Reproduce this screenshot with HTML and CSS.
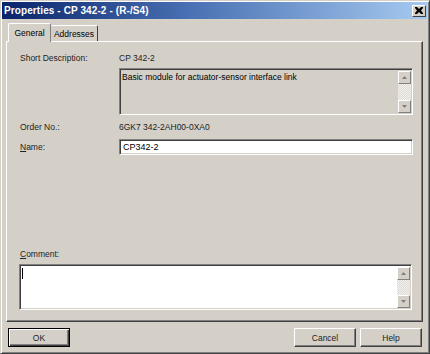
FILE: index.html
```html
<!DOCTYPE html>
<html>
<head>
<meta charset="utf-8">
<link rel="stylesheet" href="styles.css">
</head>
<body>
<div class="window">
  <div class="titlebar">
    <span class="title">Properties - CP 342-2 - (R-/S4)</span>
    <span class="close"><svg width="8" height="7" viewBox="0 0 8 7"><path d="M0 0h2l2 2 2-2h2v1L6 3.5 8 6v1H6L4 5 2 7H0V6l2-2.5L0 1z" fill="#000"/></svg></span>
  </div>
  <div class="body">
    <div class="tabs">
      <div class="tab active">General</div>
      <div class="tab">Addresses</div>
    </div>
    <div class="panel">
      <div class="row r1"><span class="lbl">Short Description:</span><span class="val">CP 342-2</span></div>
      <div class="row r2"><span class="lbl"></span>
        <div class="box desc">
          <div class="boxtext">Basic module for actuator-sensor interface link</div>
          <div class="sb"><span class="sbbtn"><svg width="5" height="3" viewBox="0 0 5 3"><path d="M2.5 0L5 3H0z" fill="#808080"/></svg></span><span class="track"></span><span class="sbbtn"><svg width="5" height="3" viewBox="0 0 5 3"><path d="M0 0h5L2.5 3z" fill="#808080"/></svg></span></div>
        </div>
      </div>
      <div class="row r3"><span class="lbl">Order No.:</span><span class="val">6GK7 342-2AH00-0XA0</span></div>
      <div class="row r4"><span class="lbl"><u>N</u>ame:</span><div class="box name">CP342-2</div></div>
      <div class="row r5"><span class="lbl"><u>C</u>omment:</span></div>
      <div class="box comment">
        <div class="boxtext"><span class="caret"></span></div>
        <div class="sb"><span class="sbbtn"><svg width="5" height="3" viewBox="0 0 5 3"><path d="M2.5 0L5 3H0z" fill="#808080"/></svg></span><span class="track"></span><span class="sbbtn"><svg width="5" height="3" viewBox="0 0 5 3"><path d="M0 0h5L2.5 3z" fill="#808080"/></svg></span></div>
      </div>
    </div>
    <div class="buttons">
      <div class="btn default">OK</div>
      <div class="spacer"></div>
      <div class="btn">Cancel</div>
      <div class="btn">Help</div>
    </div>
  </div>
</div>
</body>
</html>
```
FILE: styles.css
```css
html, body {
  margin: 0;
  padding: 0;
  background: #d4d0c8;
}
body {
  font-family: "Liberation Sans", Arial, sans-serif;
  font-size: 8.5px;
  color: #000;
}
.window {
  width: 430px;
  height: 354px;
  box-sizing: border-box;
  border-top: 1px solid #d4d0c8;
  border-left: 1px solid #d4d0c8;
  border-right: 1px solid #404040;
  border-bottom: 1px solid #404040;
  box-shadow: inset 1px 1px 0 #fff, inset -1px -1px 0 #808080;
  padding: 1px 2px 2px 1px;
  display: flex;
  flex-direction: column;
}
.titlebar {
  height: 17px;
  background: linear-gradient(to right, #0a246a 0%, #4a72b4 45%, #a6caf0 100%);
  display: flex;
  align-items: center;
  justify-content: space-between;
  padding: 0 1px 0 2px;
}
.title {
  color: #fff;
  font-weight: bold;
  font-size: 10px;
  letter-spacing: 0.1px;
}
.close {
  width: 14px;
  height: 12px;
  box-sizing: border-box;
  background: #d4d0c8;
  border-top: 1px solid #fff;
  border-left: 1px solid #fff;
  border-right: 1px solid #404040;
  border-bottom: 1px solid #404040;
  display: flex;
  align-items: center;
  justify-content: center;
}
.body {
  padding: 4px 0 0 4px;
  display: flex;
  flex-direction: column;
}
.tabs {
  display: flex;
  align-items: flex-end;
  height: 18px;
  padding-left: 2px;
}
.tab {
  box-sizing: border-box;
  height: 16px;
  padding: 0 4px;
  border-top: 1px solid #fff;
  border-left: 1px solid #fff;
  border-right: 1px solid #404040;
  border-radius: 2px 2px 0 0;
  display: flex;
  align-items: center;
}
.tab.active {
  height: 19px;
  width: 43px;
  justify-content: center;
  margin-bottom: -1px;
  background: #d4d0c8;
  position: relative;
  z-index: 1;
  border-right: 1px solid #808080;
}
.tab:not(.active) {
  width: 47px;
  justify-content: center;
  border-left: none;
}
.panel {
  width: 417px;
  height: 281px;
  box-sizing: border-box;
  border-top: 1px solid #fff;
  border-left: 1px solid #fff;
  border-right: 1px solid #404040;
  border-bottom: 1px solid #404040;
  box-shadow: inset -1px -1px 0 #808080;
  padding: 0 9px 0 13px;
  display: flex;
  flex-direction: column;
}
.row {
  display: flex;
  align-items: center;
}
.lbl {
  width: 99px;
  flex: none;
  color: #222;
}
.val { color: #222; }
.r1 { margin-top: 10px; height: 12px; }
.r2 { margin-top: 4px; }
.r3 { margin-top: 6px; height: 12px; }
.r4 { margin-top: 6px; }
.r5 { margin-top: 93px; height: 12px; }
u { text-decoration: underline; }
.box {
  box-sizing: border-box;
  border-top: 1px solid #808080;
  border-left: 1px solid #808080;
  border-right: 1px solid #fff;
  border-bottom: 1px solid #fff;
  box-shadow: inset 1px 1px 0 #404040, inset -1px -1px 0 #d4d0c8;
  display: flex;
}
.desc {
  width: 294px;
  height: 47px;
  background: #d4d0c8;
}
.name {
  width: 294px;
  height: 16px;
  background: #fff;
  align-items: center;
  padding-left: 3px;
  font-size: 9px;
}
.comment {
  margin-top: 4px;
  margin-left: -1px;
  width: 393px;
  height: 46px;
  background: #fff;
}
.boxtext {
  flex: 1;
  padding: 3px 2px;
  line-height: 11px;
}
.caret {
  display: block;
  width: 1px;
  height: 11px;
  background: #000;
}
.sb {
  width: 13px;
  margin: 2px 1px 1px 0;
  display: flex;
  flex-direction: column;
}
.sbbtn {
  height: 13px;
  box-sizing: border-box;
  background: #d4d0c8;
  border-top: 1px solid #fff;
  border-left: 1px solid #fff;
  border-right: 1px solid #808080;
  border-bottom: 1px solid #808080;
  display: flex;
  align-items: center;
  justify-content: center;
}
.track {
  flex: 1;
  background-color: #eeece8;
  background-image: repeating-conic-gradient(#dedbd5 0 25%, #f2f1ee 0 50%);
  background-size: 2px 2px;
}
.buttons {
  display: flex;
  margin-top: 6px;
  padding-left: 2px;
  height: 19px;
}
.spacer { flex: 1; }
.btn {
  box-sizing: border-box;
  width: 62px;
  height: 19px;
  border-top: 1px solid #fff;
  border-left: 1px solid #fff;
  border-right: 1px solid #404040;
  border-bottom: 1px solid #404040;
  box-shadow: inset -1px -1px 0 #808080;
  display: flex;
  align-items: center;
  justify-content: center;
  margin-left: 4px;
  color: #222;
}
.btn.default {
  margin-left: 0;
  border: 1px solid #000;
  box-shadow: inset 1px 1px 0 #fff, inset -1px -1px 0 #404040, inset -2px -2px 0 #808080;
}
.buttons .btn:last-child { margin-right: 5px; }
```
